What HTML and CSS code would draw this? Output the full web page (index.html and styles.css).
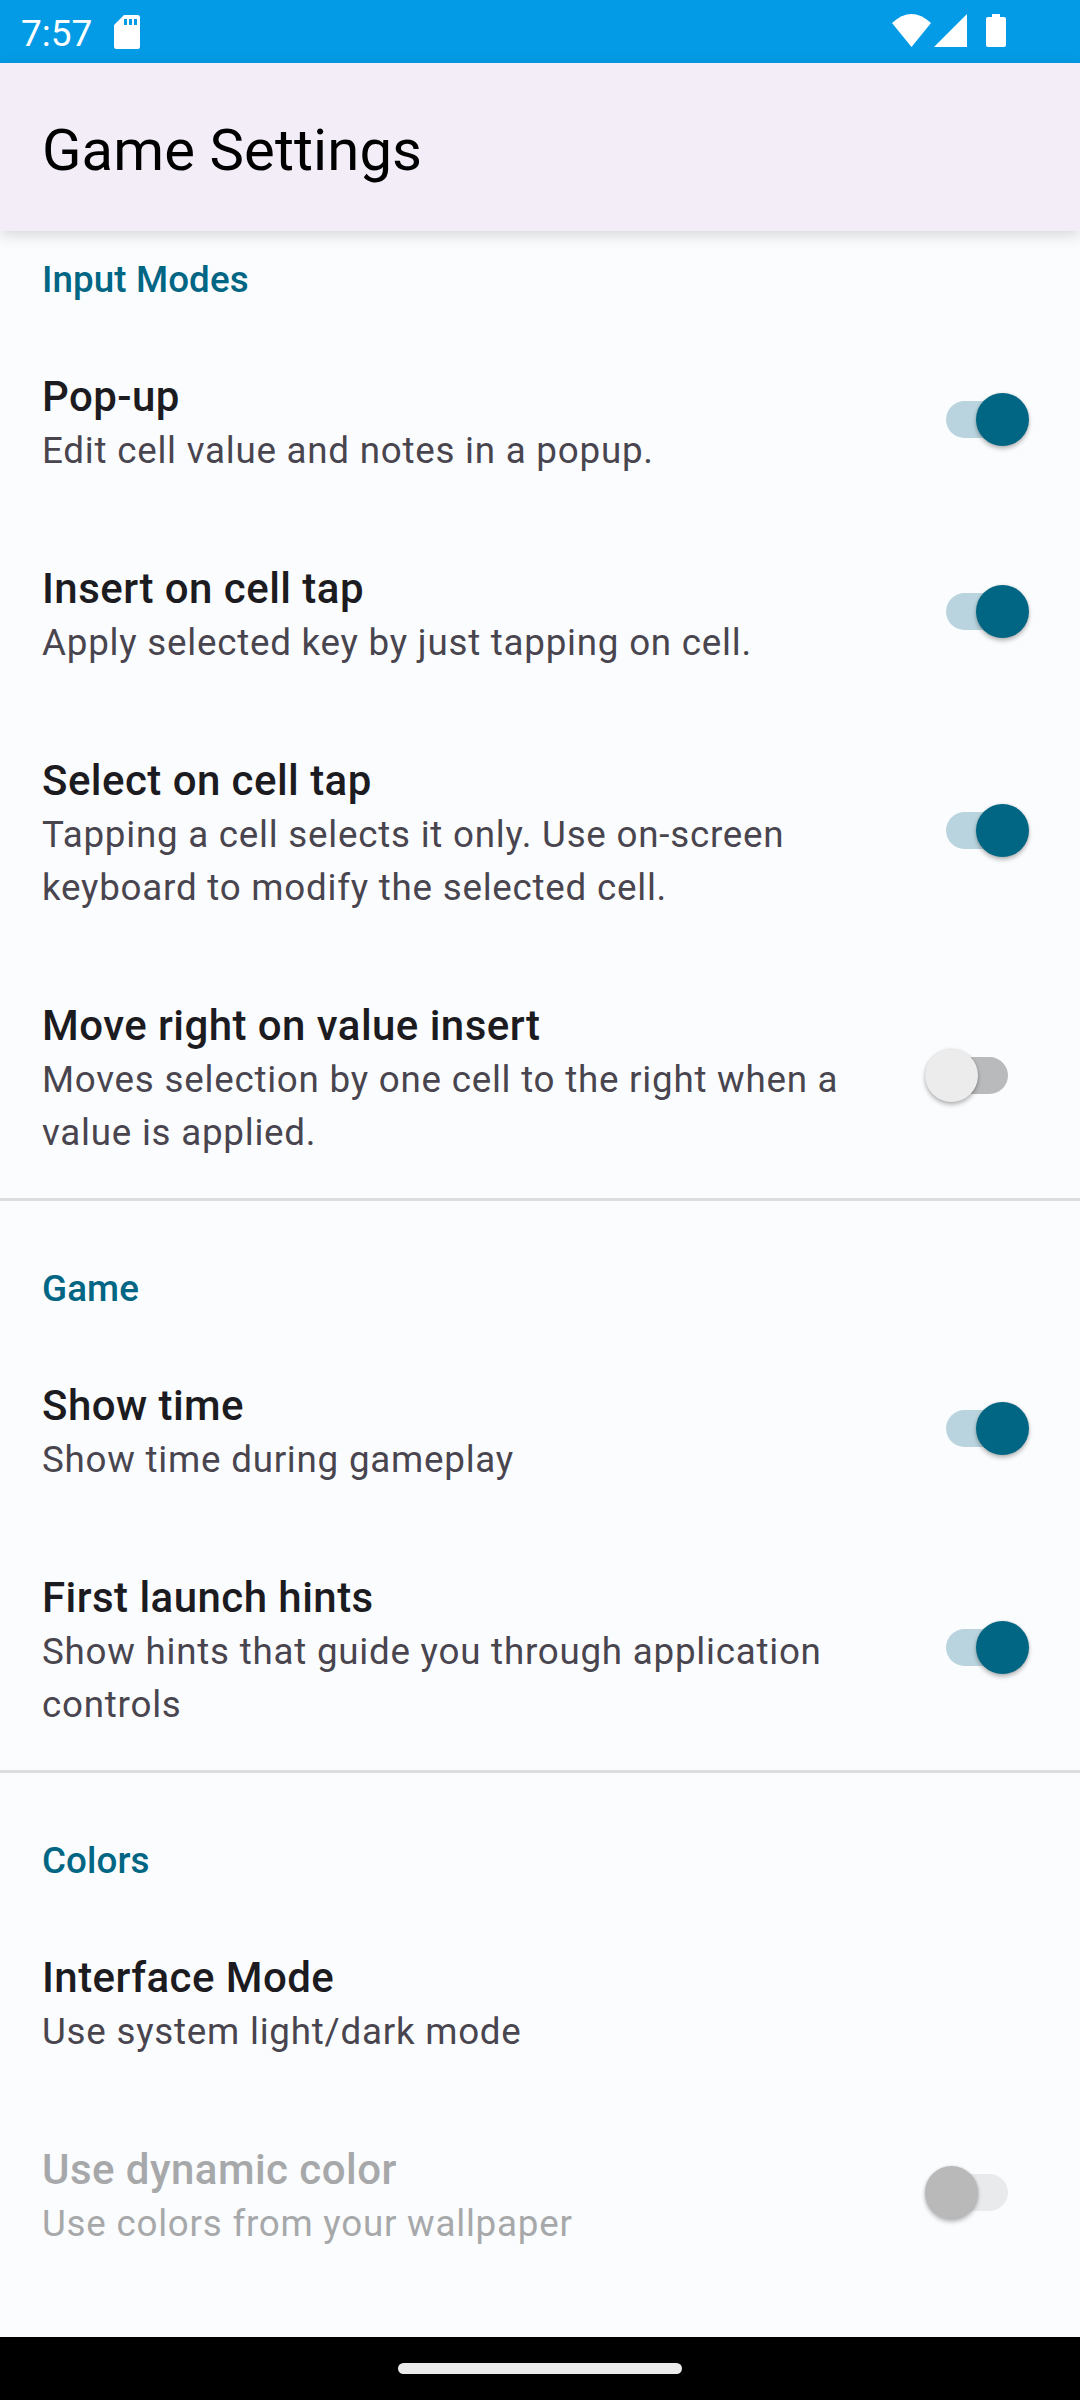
FILE: index.html
```html
<!DOCTYPE html>
<html lang="en">
<head>
<meta charset="utf-8">
<title>Game Settings</title>
<link rel="stylesheet" href="styles.css">
</head>
<body>
<div class="status">
  <span class="clock">7:57</span>
  <svg class="sd" width="26" height="34" viewBox="0 0 26 34"><path fill="#fff" fill-rule="evenodd" d="M10 0H23.500Q26 0 26 2.500V31.500Q26 34 23.500 34H2.500Q0 34 0 31.500V10ZM10 4V10H13V4ZM15 4V10H18V4ZM20 4V10H23V4Z"/></svg>
  <svg class="signals" width="120" height="36" viewBox="0 0 120 36"><path fill="#fff" d="M0 9Q19.500 -9 39 9L19.500 33Z"/><path fill="#fff" d="M42 33L75 0V33Z"/><path fill="#fff" d="M100 0H108V3H112Q114 3 114 5V31Q114 33 112 33H96Q94 33 94 31V5Q94 3 96 3H100Z"/></svg>
</div>
<header class="appbar"><h1>Game Settings</h1></header>
<main>
  <section class="group first">
    <h2>Input Modes</h2>
    <div class="row"><div class="text"><h3>Pop-up</h3><p>Edit cell value and notes in a popup.</p></div><span class="switch on"></span></div>
    <div class="row"><div class="text"><h3>Insert on cell tap</h3><p>Apply selected key by just tapping on cell.</p></div><span class="switch on"></span></div>
    <div class="row"><div class="text"><h3>Select on cell tap</h3><p>Tapping a cell selects it only. Use on-screen<br>keyboard to modify the selected cell.</p></div><span class="switch on"></span></div>
    <div class="row"><div class="text"><h3>Move right on value insert</h3><p>Moves selection by one cell to the right when a<br>value is applied.</p></div><span class="switch"></span></div>
  </section>
  <section class="group">
    <h2>Game</h2>
    <div class="row"><div class="text"><h3>Show time</h3><p>Show time during gameplay</p></div><span class="switch on"></span></div>
    <div class="row"><div class="text"><h3>First launch hints</h3><p>Show hints that guide you through application<br>controls</p></div><span class="switch on"></span></div>
  </section>
  <section class="group">
    <h2>Colors</h2>
    <div class="row"><div class="text"><h3>Interface Mode</h3><p>Use system light/dark mode</p></div></div>
    <div class="row disabled"><div class="text"><h3>Use dynamic color</h3><p>Use colors from your wallpaper</p></div><span class="switch"></span></div>
  </section>
</main>
<footer class="nav"><span class="handle"></span></footer>
</body>
</html>
```
FILE: styles.css
```css
* { box-sizing: border-box; }
body { margin: 0; width: 1080px; height: 2400px; display: flex; flex-direction: column; overflow: hidden; background: #fbfcfe; font-family: Roboto, sans-serif; }
h1, h2, h3, p { margin: 0; }
.status { height: 63px; flex: none; background: #039be5; display: flex; align-items: flex-start; padding: 0 72px 0 21px; color: #fff; }
.clock { font-size: 37px; line-height: 44px; margin-top: 12px; width: 93px; }
.sd { margin-top: 15px; }
.signals { margin: 14px -4px 0 auto; }
.appbar { height: 168px; flex: none; background: #f3edf7; display: flex; align-items: center; padding: 5px 42px 0; box-shadow: 0 4px 14px rgba(0,0,0,.15); }
h1 { font-size: 58px; font-weight: 400; color: #000; line-height: 70px; letter-spacing: .1px; }
main { flex: 1; overflow: hidden; }
.group { padding-top: 39px; border-top: 3px solid #dcdddf; }
.first { padding-top: 0; border-top: 0; }
h2 { height: 93px; padding: 27px 42px 0; font-size: 36.75px; line-height: 43px; font-weight: 500; letter-spacing: .1px; color: #006684; }
.row { display: flex; align-items: center; justify-content: space-between; height: 192px; padding: 5px 42px 0; }
.row:has(br) { height: 245px; }
h3 { font-size: 42px; line-height: 55px; font-weight: 500; letter-spacing: .45px; color: #1c1b1f; }
p { font-size: 36.75px; line-height: 53px; letter-spacing: .76px; color: #49454f; }
.switch { position: relative; flex: none; width: 113px; height: 60px; margin-top: -5px; }
.switch::before { content: ""; position: absolute; left: 21px; top: 11px; width: 62px; height: 37px; border-radius: 19px; background: #b9babc; }
.switch::after { content: ""; position: absolute; left: 0; top: 3px; width: 53px; height: 53px; border-radius: 50%; background: #ececec; box-shadow: 0 3px 4px rgba(0,0,0,.25), 0 0 3px rgba(0,0,0,.12); }
.on::before { background: #b9d4de; }
.on::after { left: 51px; background: #006684; }
.disabled h3, .disabled p { color: #a7a8aa; }
.disabled .switch::before { background: #e9eaec; }
.disabled .switch::after { background: #b9b9b9; }
.nav { height: 63px; flex: none; background: #000; display: flex; justify-content: center; align-items: center; }
.handle { width: 284px; height: 11px; border-radius: 6px; background: #ebebeb; }
```
